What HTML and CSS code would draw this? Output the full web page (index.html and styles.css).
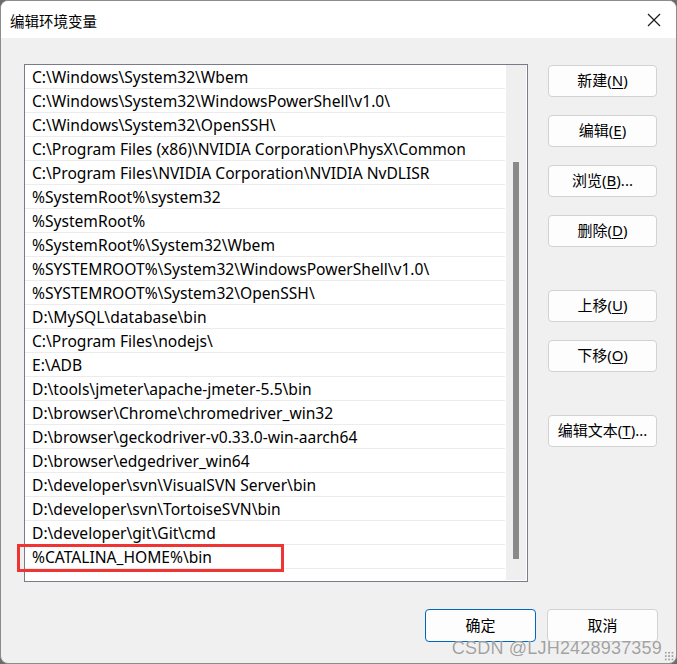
FILE: index.html
```html
<!DOCTYPE html>
<html lang="zh-CN">
  <head>
    <meta charset="UTF-8" />
    <title>编辑环境变量</title>
    <link rel="stylesheet" href="styles.css">
  </head>
  <body>
    <div class="dialog">
      <div class="title-bar">
        <span class="title">编辑环境变量</span>
        <span class="close">
          <svg width="14" height="14" viewBox="0 0 14 14">
            <path d="M1 1 L13 13 M13 1 L1 13" stroke="#1a1a1a" stroke-width="1.2" fill="none" />
          </svg>
        </span>
      </div>

      <div class="content">
        <div class="main">
          <div class="list-wrap">
            <div class="path-list">
              <div class="rows">
                <div class="row">C:\Windows\System32\Wbem</div>
                <div class="row">C:\Windows\System32\WindowsPowerShell\v1.0\</div>
                <div class="row">C:\Windows\System32\OpenSSH\</div>
                <div class="row">C:\Program Files (x86)\NVIDIA Corporation\PhysX\Common</div>
                <div class="row">C:\Program Files\NVIDIA Corporation\NVIDIA NvDLISR</div>
                <div class="row">%SystemRoot%\system32</div>
                <div class="row">%SystemRoot%</div>
                <div class="row">%SystemRoot%\System32\Wbem</div>
                <div class="row">%SYSTEMROOT%\System32\WindowsPowerShell\v1.0\</div>
                <div class="row">%SYSTEMROOT%\System32\OpenSSH\</div>
                <div class="row">D:\MySQL\database\bin</div>
                <div class="row">C:\Program Files\nodejs\</div>
                <div class="row">E:\ADB</div>
                <div class="row">D:\tools\jmeter\apache-jmeter-5.5\bin</div>
                <div class="row">D:\browser\Chrome\chromedriver_win32</div>
                <div class="row">D:\browser\geckodriver-v0.33.0-win-aarch64</div>
                <div class="row">D:\browser\edgedriver_win64</div>
                <div class="row">D:\developer\svn\VisualSVN Server\bin</div>
                <div class="row">D:\developer\svn\TortoiseSVN\bin</div>
                <div class="row">D:\developer\git\Git\cmd</div>
                <div class="row">%CATALINA_HOME%\bin</div>
              </div>
              <div class="scrollbar">
                <div class="thumb"></div>
              </div>
            </div>
            <div class="highlight"></div>
          </div>

          <div class="actions">
            <div class="group">
              <button class="btn">新建(<u>N</u>)</button>
              <button class="btn">编辑(<u>E</u>)</button>
              <button class="btn">浏览(<u>B</u>)...</button>
              <button class="btn">删除(<u>D</u>)</button>
            </div>
            <div class="group">
              <button class="btn">上移(<u>U</u>)</button>
              <button class="btn">下移(<u>O</u>)</button>
            </div>
            <div class="group">
              <button class="btn">编辑文本(<u>T</u>)...</button>
            </div>
          </div>
        </div>

        <div class="footer">
          <button class="btn wide primary">确定</button>
          <button class="btn wide">取消</button>
        </div>
      </div>

      <div class="watermark">CSDN @LJH2428937359</div>
      <div class="grip"></div>
    </div>
  </body>
</html>
```

FILE: styles.css
```css
body {
  margin: 0;
  font-family: "Noto Sans", "Noto Sans CJK SC", sans-serif;
  color: #000;
  background-color: #6b6b6b;
}
.dialog {
  position: relative;
  box-sizing: border-box;
  width: 677px;
  height: 664px;
  background-color: #f0f0f0;
  border: 1px solid #8c8c8c;
  border-radius: 8px;
  overflow: hidden;
  display: flex;
  flex-direction: column;
}
.title-bar {
  height: 37px;
  background-color: #fff;
  display: flex;
  align-items: center;
  justify-content: space-between;
  padding: 0 15px 0 9px;
}
.title {
  font-size: 14.5px;
  padding-top: 1px;
}
.close {
  display: flex;
}
.content {
  flex: 1;
  display: flex;
  flex-direction: column;
  padding: 26px 18px 0 23px;
}
.main {
  display: flex;
  gap: 20px;
}
.list-wrap {
  position: relative;
}
.path-list {
  width: 502px;
  height: 516px;
  border: 1px solid #7a7a88;
  background-color: #fff;
  display: flex;
}
.rows {
  flex: 1;
  font-size: 15.6px;
  line-height: 24px;
}
.row {
  height: 23px;
  padding-left: 7px;
  border-bottom: 1px solid #ececec;
  white-space: nowrap;
}
.scrollbar {
  width: 20px;
  margin: 0 1px 1px 1px;
  background-color: #efefef;
  position: relative;
}
.thumb {
  position: absolute;
  left: 7px;
  top: 97px;
  width: 6px;
  height: 397px;
  background-color: #8a8a8a;
}
/* red annotation box around the last entry */
.highlight {
  position: absolute;
  left: -7px;
  top: 480px;
  width: 261px;
  height: 22px;
  border: 3px solid #f03434;
}
.actions {
  display: flex;
  flex-direction: column;
  gap: 43px;
  padding-top: 1px;
}
.group {
  display: flex;
  flex-direction: column;
  gap: 18px;
}
.btn {
  width: 109px;
  height: 32px;
  font-family: "Noto Sans", "Noto Sans CJK SC", sans-serif;
  font-size: 15px;
  line-height: 20px;
  color: #000;
  background-color: #fdfdfd;
  border: 1px solid #d2d2d2;
  border-radius: 4px;
  padding: 0 0 2px;
}
.btn u {
  text-underline-offset: 2px;
}
.footer {
  display: flex;
  justify-content: flex-end;
  gap: 11px;
  margin-top: 27px;
}
.btn.wide {
  width: 111px;
  height: 33px;
  font-size: 15px;
}
.btn.primary {
  border: 1px solid #0067c0;
}
.watermark {
  position: absolute;
  right: 14px;
  bottom: 4px;
  font-family: "Liberation Sans", Arial, sans-serif;
  font-size: 18px;
  color: rgba(130, 130, 130, 0.75);
  text-shadow: 0 0 1px #fff;
  letter-spacing: 0.2px;
}
.grip {
  position: absolute;
  right: 2px;
  bottom: 2px;
  width: 10px;
  height: 10px;
  background-image: radial-gradient(circle, #a0a0a0 1px, transparent 1.2px);
  background-size: 3.4px 3.4px;
}
```
